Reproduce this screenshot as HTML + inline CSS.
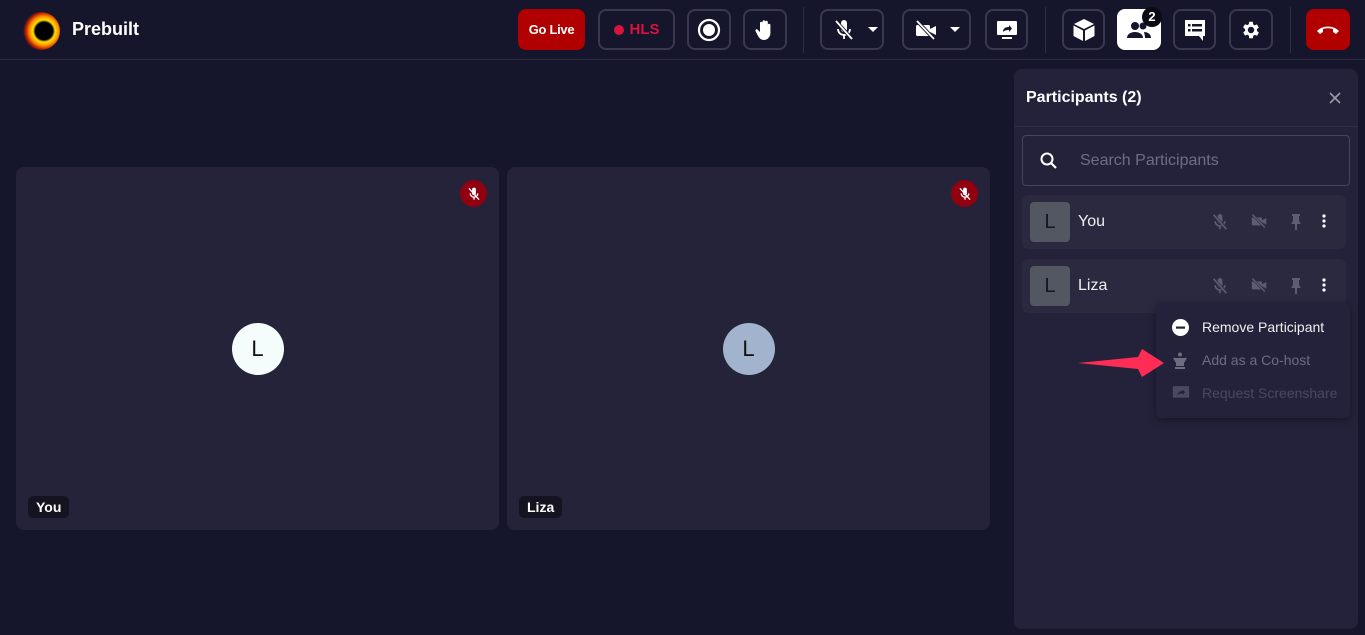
<!DOCTYPE html>
<html><head><meta charset="utf-8"><style>
*{margin:0;padding:0;box-sizing:border-box}
body{width:1365px;height:635px;background:#15152b;font-family:"Liberation Sans",sans-serif;color:#fff;position:relative;overflow:hidden}
.a{position:absolute}
.hdr{left:0;top:0;width:1365px;height:60px;border-bottom:1px solid #2e2c45}
.btn{position:absolute;top:9px;height:41px;border:2px solid #3a3850;border-radius:8px;display:flex;align-items:center;justify-content:center}
.div{position:absolute;top:7px;width:1px;height:46px;background:#2e2c45}
.tile{position:absolute;top:167px;height:363px;background:#252339;border-radius:8px}
.av{position:absolute;left:50%;top:50%;width:52px;height:52px;margin:-26px 0 0 -26px;border-radius:50%;display:flex;align-items:center;justify-content:center;font-size:22px;color:#111}
.mute{position:absolute;top:13px;right:12px;width:27px;height:27px;border-radius:50%;background:#900010;display:flex;align-items:center;justify-content:center}
.name{position:absolute;left:12px;bottom:12px;background:#15131f;border-radius:5px;padding:3px 8px;font-size:14px;font-weight:bold}
.row{position:absolute;left:8px;width:324px;height:54px;background:#2b2940;border-radius:6px}
.ra{position:absolute;left:8px;top:7px;width:40px;height:40px;border-radius:4px;background:#535761;color:#15152b;font-size:20px;display:flex;align-items:center;justify-content:center}
.rn{position:absolute;left:56px;top:18px;font-size:16px;color:#eee}
.ic{position:absolute;top:18px}
</style></head><body>
<div class="a hdr"></div>
<div class="a" style="left:22px;top:12px;width:38px;height:38px;border-radius:50%;background:radial-gradient(circle at 58% 50%,#000 0 30%,#ffe000 38%,#ff9000 50%,#c02000 62%,rgba(120,0,0,0) 72%)"></div>
<div class="a" style="left:72px;top:19px;font-size:18px;font-weight:bold">Prebuilt</div>
<div class="btn" style="left:518px;width:67px;background:#b00000;border-color:#b00000;font-size:13px;font-weight:bold;letter-spacing:-0.3px">Go Live</div>
<div class="btn" style="left:598px;width:77px;color:#d8143c;font-size:15px;font-weight:bold"><span style="width:10px;height:10px;border-radius:50%;background:#d8143c;margin-right:6px"></span>HLS</div>
<div class="btn" style="left:687px;width:44px"><svg width="24" height="24"><circle cx="12" cy="12" r="10" fill="none" stroke="#fff" stroke-width="2.2"/><circle cx="12" cy="12" r="6" fill="#fff"/></svg></div>
<div class="btn" style="left:743px;width:44px"><svg width="20" height="22" viewBox="0 0 20 22"><path d="M5 12V4a1.3 1.3 0 012.6 0v6V2.5a1.3 1.3 0 012.6 0V10V3a1.3 1.3 0 012.6 0v8V6a1.3 1.3 0 012.6 0v8c0 4-3 7-6.5 7S3.5 18 2 15l-1.5-3a1.3 1.3 0 012.2-1.3L5 13z" fill="#fff"/></svg></div>
<div class="div" style="left:803px"></div>
<div class="btn" style="left:820px;width:64px;justify-content:flex-start;padding-left:12px"><svg width="20" height="22" viewBox="0 0 20 22"><rect x="7" y="1" width="6" height="12" rx="3" fill="#fff"/><path d="M4 10a6 6 0 0012 0M10 16v4" stroke="#fff" stroke-width="1.8" fill="none"/><path d="M2 2l16 18" stroke="#15152b" stroke-width="3.5"/><path d="M2 2l16 18" stroke="#fff" stroke-width="1.8"/></svg><svg width="10" height="6" style="margin-left:14px"><path d="M0 0h10L5 5z" fill="#fff"/></svg></div>
<div class="btn" style="left:902px;width:69px;justify-content:flex-start;padding-left:10px"><svg width="24" height="22" viewBox="0 0 24 22"><rect x="2" y="6" width="14" height="11" rx="1.5" fill="#fff"/><path d="M16 10l6-3v9l-6-3z" fill="#fff"/><path d="M3 2l17 18" stroke="#15152b" stroke-width="3.5"/><path d="M3 2l17 18" stroke="#fff" stroke-width="1.8"/></svg><svg width="10" height="6" style="margin-left:12px"><path d="M0 0h10L5 5z" fill="#fff"/></svg></div>
<div class="btn" style="left:985px;width:43px"><svg width="22" height="20" viewBox="0 0 22 20"><rect x="1" y="1" width="20" height="14" rx="1" fill="#fff"/><path d="M7 12c0-4 3-5 6-5V5l3 3.5L13 12v-2c-3 0-4.5.5-6 2z" fill="#15152b"/><rect x="6" y="17" width="10" height="2" fill="#fff"/></svg></div>
<div class="div" style="left:1045px"></div>
<div class="btn" style="left:1062px;width:43px"><svg width="24" height="24" viewBox="0 0 24 24"><path d="M12 1L2 6l10 5 10-5z" fill="#fff"/><path d="M1.5 7.5l9.5 5V23L1.5 18z" fill="#fff"/><path d="M22.5 7.5l-9.5 5V23l9.5-5z" fill="#fff"/></svg></div>
<div class="btn" style="left:1117px;width:44px;background:#fff;border-color:#fff"><svg width="26" height="20" viewBox="0 0 26 20"><circle cx="9" cy="6" r="4" fill="#15152b"/><circle cx="17" cy="6" r="3.5" fill="#15152b"/><path d="M1 18c0-4 4-6 8-6s8 2 8 6z" fill="#15152b"/><path d="M18 12c3 0 7 1.5 7 6h-6c0-2-0.5-4-1-6z" fill="#15152b"/></svg></div>
<div class="a" style="left:1142px;top:7px;width:20px;height:20px;border-radius:50%;background:#0b0b14;font-size:13px;font-weight:bold;text-align:center;line-height:20px">2</div>
<div class="btn" style="left:1173px;width:43px"><svg width="24" height="24" viewBox="0 0 24 24"><path d="M2 2h20v16h-2v5l-4-5H2z" fill="#fff"/><rect x="5" y="6" width="2.5" height="2.5" fill="#15152b"/><rect x="9" y="6" width="10" height="2.5" fill="#15152b"/><rect x="5" y="11" width="2.5" height="2.5" fill="#15152b"/><rect x="9" y="11" width="10" height="2.5" fill="#15152b"/></svg></div>
<div class="btn" style="left:1229px;width:44px"><svg width="22" height="22" viewBox="0 0 24 24"><path fill="#fff" d="M19.4 13a7.5 7.5 0 000-2l2.1-1.6-2-3.5-2.5 1a7 7 0 00-1.7-1L15 3h-4l-.4 2.7a7 7 0 00-1.7 1l-2.5-1-2 3.5L6.6 11a7.5 7.5 0 000 2l-2.1 1.6 2 3.5 2.5-1a7 7 0 001.7 1L11 21h4l.4-2.7a7 7 0 001.7-1l2.5 1 2-3.5zM13 15.5a3.5 3.5 0 110-7 3.5 3.5 0 010 7z" transform="translate(-1 0)"/></svg></div>
<div class="div" style="left:1290px"></div>
<div class="btn" style="left:1306px;width:44px;background:#b00000;border-color:#b00000"><svg width="24" height="12" viewBox="0 0 24 12"><path d="M1 7c6-6 16-6 22 0l-3 3-3-2V5c-3-1-7-1-10 0v3l-3 2z" fill="#fff"/></svg></div>

<div class="tile" style="left:16px;width:483px"><div class="mute"><svg width="14" height="14" viewBox="0 0 20 22"><rect x="7" y="1" width="6" height="12" rx="3" fill="#fff"/><path d="M4 10a6 6 0 0012 0M10 16v4" stroke="#fff" stroke-width="2" fill="none"/><path d="M2 2l16 18" stroke="#fff" stroke-width="2"/></svg></div><div class="av" style="background:#f5fcfc">L</div><div class="name">You</div></div>
<div class="tile" style="left:507px;width:483px"><div class="mute"><svg width="14" height="14" viewBox="0 0 20 22"><rect x="7" y="1" width="6" height="12" rx="3" fill="#fff"/><path d="M4 10a6 6 0 0012 0M10 16v4" stroke="#fff" stroke-width="2" fill="none"/><path d="M2 2l16 18" stroke="#fff" stroke-width="2"/></svg></div><div class="av" style="background:#a2b4cd">L</div><div class="name">Liza</div></div>

<div class="a" style="left:1014px;top:69px;width:344px;height:560px;background:#24223a;border-radius:8px">
 <div class="a" style="left:12px;top:20px;font-size:16px;font-weight:bold">Participants (2)</div>
 <svg class="a" style="left:315px;top:23px" width="12" height="12"><path d="M1 1l10 10M11 1L1 11" stroke="#9a98a8" stroke-width="1.6"/></svg>
 <div class="a" style="left:0;top:57px;width:344px;height:1px;background:#2f2d46"></div>
 <div class="a" style="left:8px;top:66px;width:328px;height:51px;border:1px solid #46445c;border-radius:4px">
  <svg class="a" style="left:16px;top:15px" width="20" height="20"><circle cx="8" cy="8" r="5.5" fill="none" stroke="#fff" stroke-width="2"/><path d="M12 12l5 5" stroke="#fff" stroke-width="2.2"/></svg>
  <div class="a" style="left:57px;top:16px;font-size:16px;color:#6f6d83">Search Participants</div>
 </div>
 <div class="row" style="top:126px"><div class="ra">L</div><div class="rn">You</div>
  <svg class="ic" style="left:190px" width="16" height="18" viewBox="0 0 20 22"><rect x="7" y="1" width="6" height="12" rx="3" fill="#5e5c70"/><path d="M4 10a6 6 0 0012 0M10 16v4" stroke="#5e5c70" stroke-width="2" fill="none"/><path d="M2 2l16 18" stroke="#2b2940" stroke-width="3.5"/><path d="M2 2l16 18" stroke="#5e5c70" stroke-width="2"/></svg>
  <svg class="ic" style="left:228px" width="18" height="16" viewBox="0 0 24 22"><rect x="2" y="6" width="14" height="11" rx="1.5" fill="#5e5c70"/><path d="M16 10l6-3v9l-6-3z" fill="#5e5c70"/><path d="M3 2l17 18" stroke="#2b2940" stroke-width="3.5"/><path d="M3 2l17 18" stroke="#5e5c70" stroke-width="2"/></svg>
  <svg class="ic" style="left:268px" width="12" height="18" viewBox="0 0 12 18"><path d="M2 1h8v2H9v5l2 3H1l2-3V3H2z M5 11h2v6H5z" fill="#5e5c70"/></svg>
  <svg class="ic" style="left:300px" width="4" height="16"><circle cx="2" cy="3" r="1.6" fill="#fff"/><circle cx="2" cy="8" r="1.6" fill="#fff"/><circle cx="2" cy="13" r="1.6" fill="#fff"/></svg>
 </div>
 <div class="row" style="top:190px"><div class="ra">L</div><div class="rn">Liza</div>
  <svg class="ic" style="left:190px" width="16" height="18" viewBox="0 0 20 22"><rect x="7" y="1" width="6" height="12" rx="3" fill="#5e5c70"/><path d="M4 10a6 6 0 0012 0M10 16v4" stroke="#5e5c70" stroke-width="2" fill="none"/><path d="M2 2l16 18" stroke="#2b2940" stroke-width="3.5"/><path d="M2 2l16 18" stroke="#5e5c70" stroke-width="2"/></svg>
  <svg class="ic" style="left:228px" width="18" height="16" viewBox="0 0 24 22"><rect x="2" y="6" width="14" height="11" rx="1.5" fill="#5e5c70"/><path d="M16 10l6-3v9l-6-3z" fill="#5e5c70"/><path d="M3 2l17 18" stroke="#2b2940" stroke-width="3.5"/><path d="M3 2l17 18" stroke="#5e5c70" stroke-width="2"/></svg>
  <svg class="ic" style="left:268px" width="12" height="18" viewBox="0 0 12 18"><path d="M2 1h8v2H9v5l2 3H1l2-3V3H2z M5 11h2v6H5z" fill="#5e5c70"/></svg>
  <svg class="ic" style="left:300px" width="4" height="16"><circle cx="2" cy="3" r="1.6" fill="#fff"/><circle cx="2" cy="8" r="1.6" fill="#fff"/><circle cx="2" cy="13" r="1.6" fill="#fff"/></svg>
 </div>
</div>
<div class="a" style="left:1156px;top:303px;width:194px;height:115px;background:#24223a;border-radius:5px;box-shadow:0 2px 8px rgba(0,0,0,.4)">
 <svg class="a" style="left:16px;top:16px" width="17" height="17"><circle cx="8.5" cy="8.5" r="8.5" fill="#fff"/><rect x="4" y="7.5" width="9" height="2.2" fill="#24223a"/></svg>
 <div class="a" style="left:46px;top:16px;font-size:14px;color:#eee">Remove Participant</div>
 <svg class="a" style="left:16px;top:49px" width="16" height="18" viewBox="0 0 16 18"><circle cx="8" cy="2.5" r="2" fill="#6e6c80"/><path d="M1 6h14l-3 5v3H4v-3z M3 15h10v2H3z" fill="#6e6c80"/></svg>
 <div class="a" style="left:46px;top:49px;font-size:14px;color:#6e6c80">Add as a Co-host</div>
 <svg class="a" style="left:16px;top:82px" width="18" height="17" viewBox="0 0 22 20"><rect x="1" y="1" width="20" height="14" rx="1" fill="#4a4860"/><path d="M7 12c0-4 3-5 6-5V5l3 3.5L13 12v-2c-3 0-4.5.5-6 2z" fill="#24223a"/></svg>
 <div class="a" style="left:46px;top:82px;font-size:14px;color:#4a4860">Request Screenshare</div>
</div>
<svg class="a" style="left:1076px;top:347px" width="90" height="32"><path d="M2 16L62 10L66 2L88 16L66 30L62 22z" fill="#ff2d55"/></svg>
</body></html>
